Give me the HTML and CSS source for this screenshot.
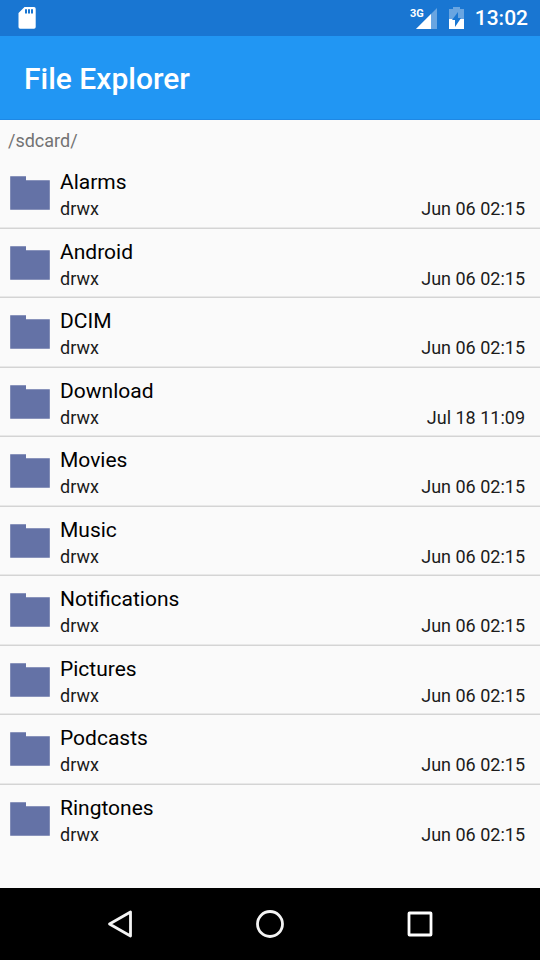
FILE: index.html
```html
<!DOCTYPE html>
<html lang="en">
<head>
<meta charset="utf-8">
<meta name="viewport" content="width=device-width, initial-scale=1">
<title>File Explorer</title>
<link rel="stylesheet" href="styles.css">
</head>
<body>
<div class="status">
  <svg class="sd" viewBox="0 0 18 22" width="18" height="22" aria-hidden="true"><path fill="#fff" fill-rule="evenodd" d="M6.500 0H16a1.700 1.700 0 0 1 1.700 1.700V20a1.700 1.700 0 0 1-1.700 1.700H2.200A1.700 1.700 0 0 1 .5 20V6ZM7 2.300V6.500H9V2.300ZM10 2.300V6.500H12V2.300ZM13 2.300V6.500H15V2.300Z"/></svg>
  <div class="signal">
    <span class="network">3G</span>
    <svg viewBox="0 0 21 21" width="21" height="21" aria-hidden="true"><path fill="#fff" fill-opacity=".35" d="M21 0V21H0Z"/><path fill="#fff" d="M15 6V21H0Z"/></svg>
  </div>
  <svg class="battery" viewBox="0 0 15 22" width="15" height="22" aria-hidden="true"><path fill="#fff" fill-opacity=".35" d="M4 0H11V2H15V12H0V2H4Z"/><path fill="#fff" d="M0 12H15V22H0Z"/><path fill="#1976d2" d="M9 5V11H12L6 20V13H3Z"/></svg>
  <time class="clock">13:02</time>
</div>
<header class="appbar"><h1>File Explorer</h1></header>
<main class="content">
  <p class="path">/sdcard/</p>
  <ul class="files" id="files"></ul>
</main>
<nav class="navbar" aria-label="System">
  <button type="button" aria-label="Back"><svg viewBox="0 0 30 30" width="30" height="30"><path d="M4.500 15 25.500 3V27Z" fill="none" stroke="#f4f4f4" stroke-width="2.800" stroke-linejoin="round"/></svg></button>
  <button type="button" aria-label="Home"><svg viewBox="0 0 30 30" width="30" height="30"><circle cx="15" cy="15" r="12.500" fill="none" stroke="#f4f4f4" stroke-width="2.800"/></svg></button>
  <button type="button" aria-label="Recent apps"><svg viewBox="0 0 30 30" width="30" height="30"><rect x="4" y="4" width="22" height="22" rx="0.500" fill="none" stroke="#fff" stroke-width="2.800" stroke-linejoin="round"/></svg></button>
</nav>
<script src="files.js"></script>
</body>
</html>
```
FILE: styles.css
```css
* {
  box-sizing: border-box;
}

body {
  margin: 0;
  min-height: 100vh;
  display: flex;
  flex-direction: column;
  background: #fafafa;
  color: #000;
  font-family: Roboto, sans-serif;
}

svg {
  display: block;
}

.status {
  display: flex;
  align-items: center;
  height: 36px;
  padding: 0 12px 0 18px;
  background: #1976d2;
  color: #fff;
}

.signal {
  display: flex;
  margin-left: auto;
}

.network {
  margin-right: -8px;
  font-size: 11px;
  line-height: 12px;
  font-weight: 700;
}

.battery {
  margin: 0 11px 0 12px;
}

.clock {
  font-size: 21px;
  line-height: 24px;
  font-weight: 500;
}

.appbar {
  display: flex;
  align-items: center;
  height: 84px;
  padding: 2px 24px 0;
  background: #2196f3;
  border-bottom: 1px solid #1e88e5;
  color: #fff;
}

h1 {
  margin: 0;
  font-size: 30px;
  line-height: 36px;
  font-weight: 500;
}

.content {
  flex: 1;
  display: flex;
  flex-direction: column;
  padding-bottom: 34px;
}

.path {
  margin: 0;
  padding: 9px 8px 6px;
  font-size: 18px;
  line-height: 24px;
  color: #737373;
}

.files {
  flex: 1;
  display: grid;
  grid-auto-rows: 1fr;
  margin: 0;
  padding: 0;
  list-style: none;
}

.file {
  display: flex;
  gap: 10px;
  padding: 10px 15px 0 10px;
  border-bottom: 1px solid #d4d4d4;
  box-shadow: inset 0 -1px #e8e8e8;
}

.file:last-child {
  border-bottom-color: transparent;
  box-shadow: none;
}

.folder {
  flex: none;
  margin-top: 7px;
}

.details {
  flex: 1;
}

.name {
  font-size: 21px;
  line-height: 26px;
}

.meta {
  display: flex;
  justify-content: space-between;
  font-size: 18px;
  line-height: 28px;
  color: #1b1b1b;
}

.navbar {
  display: flex;
  justify-content: center;
  gap: 90px;
  height: 72px;
  background: #000;
}

.navbar button {
  display: grid;
  place-items: center;
  width: 60px;
  padding: 0;
  border: 0;
  background: none;
}
```
FILE: files.js
```js
const files = [
  ["Alarms", "Jun 06 02:15"],
  ["Android", "Jun 06 02:15"],
  ["DCIM", "Jun 06 02:15"],
  ["Download", "Jul 18 11:09"],
  ["Movies", "Jun 06 02:15"],
  ["Music", "Jun 06 02:15"],
  ["Notifications", "Jun 06 02:15"],
  ["Pictures", "Jun 06 02:15"],
  ["Podcasts", "Jun 06 02:15"],
  ["Ringtones", "Jun 06 02:15"],
];

document.getElementById("files").innerHTML = files.map(([name, modified]) => `
  <li class="file">
    <svg class="folder" viewBox="0 0 40 34" width="40" height="34" aria-hidden="true"><path fill="#6472a6" d="M.2.2H16V4.200H39.800V33.800H.2Z"/></svg>
    <div class="details">
      <div class="name">${name}</div>
      <div class="meta"><span>drwx</span><time>${modified}</time></div>
    </div>
  </li>`).join("");
```
